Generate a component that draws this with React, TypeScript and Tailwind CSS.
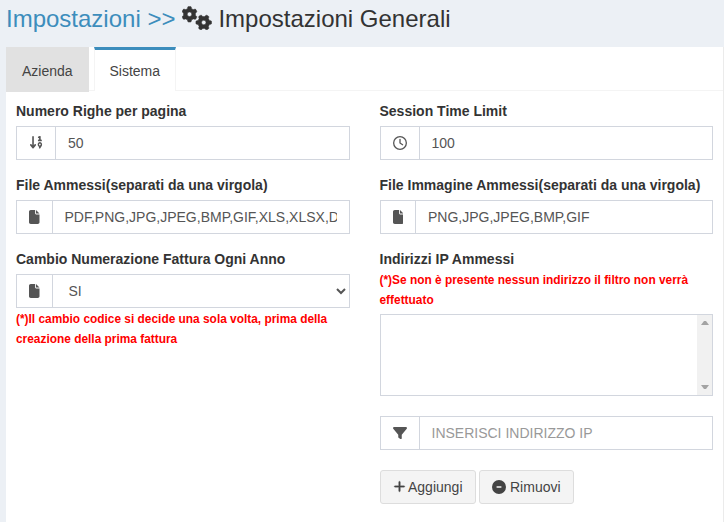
import type { ReactNode } from "react";
import {
  FaGears,
  FaArrowDown19,
  FaRegClock,
  FaFile,
  FaFilter,
  FaPlus,
  FaCircleMinus,
} from "react-icons/fa6";

function Label({ children }: { children: ReactNode }) {
  return <label className="block h-5 font-bold leading-5 text-[#333]">{children}</label>;
}

function Group({
  icon,
  wide = false,
  children,
}: {
  icon: ReactNode;
  wide?: boolean;
  children: ReactNode;
}) {
  return (
    <div className="flex h-[34px] border border-[#d2d6de] bg-white">
      <span
        className={
          "flex shrink-0 items-center justify-center border-r border-[#d2d6de] pb-px text-[14px] text-[#555] " +
          (wide ? "w-[39px]" : "w-[35.5px]")
        }
      >
        {icon}
      </span>
      {children}
    </div>
  );
}

function TextInput({ value, placeholder }: { value?: string; placeholder?: string }) {
  return (
    <input
      className="mx-3 h-8 min-w-0 flex-1 bg-transparent text-[14px] text-[#555] outline-none placeholder:text-[#999]"
      defaultValue={value}
      placeholder={placeholder}
    />
  );
}

function Note({ children }: { children: ReactNode }) {
  return <p className="text-[11.9px] font-bold leading-5 text-[#ff0000]">{children}</p>;
}

export default function App() {
  return (
    <div className="h-[522px] w-[724px] overflow-hidden bg-[#ecf0f5] pl-1.5 font-['Liberation_Sans',Arial,sans-serif] text-[14px] text-[#333]">
      <h1 className="flex h-[47px] items-start whitespace-pre pt-[5px] text-[24px] leading-[27px]">
        <span className="text-[#3c8dbc]">Impostazioni &gt;&gt;</span>
        <FaGears stroke="currentColor" strokeWidth="10" className="ml-[7px] mt-px h-6 w-[30px]" />
        <span className="ml-[6px]">Impostazioni Generali</span>
      </h1>

      <main className="h-[475px] border-r border-[#ebebeb] bg-white">
        <nav className="flex h-11 border-b border-[#f4f4f4] leading-5 text-[#444]">
          <div className="h-[45px] w-[83px] bg-[#e1e1e1] pl-4 pt-[14px]">Azienda</div>
          <div className="ml-[5px] h-11 w-[82px] border-x border-t-[3px] border-x-[#f4f4f4] border-t-[#3c8dbc] bg-white pl-[14.5px] pt-[11px]">
            Sistema
          </div>
        </nav>

        <div className="grid grid-cols-[333.5px_333.5px] gap-x-[30px] px-2.5 pt-[10px]">
          <section>
            <Label>Numero Righe per pagina</Label>
            <div className="mb-[15px] mt-[5px]">
              <Group
                wide
                icon={<FaArrowDown19 preserveAspectRatio="none" className="h-[14.5px] w-[14.5px]" />}
              >
                <TextInput value="50" />
              </Group>
            </div>
            <Label>File Ammessi(separati da una virgola)</Label>
            <div className="mb-[15px] mt-[5px]">
              <Group icon={<FaFile className="h-[14px] w-[10.5px]" />}>
                <TextInput value="PDF,PNG,JPG,JPEG,BMP,GIF,XLS,XLSX,DOC,DOCX" />
              </Group>
            </div>
            <Label>Cambio Numerazione Fattura Ogni Anno</Label>
            <div className="mt-[5px]">
              <Group icon={<FaFile className="h-[14px] w-[10.5px]" />}>
                <div className="flex flex-1 items-center justify-between pl-4 pr-[3px] text-[#555]">
                  <span>SI</span>
                  <svg width="10" height="8" viewBox="0 0 10 8" fill="none" stroke="#555" strokeWidth="2">
                    <path d="M1 2l4 4 4-4" />
                  </svg>
                </div>
              </Group>
            </div>
            <div className="mt-px">
              <Note>(*)Il cambio codice si decide una sola volta, prima della creazione della prima fattura</Note>
            </div>
          </section>

          <section>
            <Label>Session Time Limit</Label>
            <div className="mb-[15px] mt-[5px]">
              <Group wide icon={<FaRegClock />}>
                <TextInput value="100" />
              </Group>
            </div>
            <Label>File Immagine Ammessi(separati da una virgola)</Label>
            <div className="mb-[15px] mt-[5px]">
              <Group icon={<FaFile className="h-[14px] w-[10.5px]" />}>
                <TextInput value="PNG,JPG,JPEG,BMP,GIF" />
              </Group>
            </div>
            <Label>Indirizzi IP Ammessi</Label>
            <div className="mt-px">
              <Note>(*)Se non è presente nessun indirizzo il filtro non verrà effettuato</Note>
            </div>
            <div className="mt-1 flex h-[82px] justify-end border border-[#d2d6de]">
              <div className="flex w-[15px] flex-col items-center justify-between bg-[#f1f1f1] py-[6px] text-[#a3a3a3]">
                <svg width="8" height="4" viewBox="0 0 8 4" fill="currentColor">
                  <path d="M0 4L3 0H5L8 4z" />
                </svg>
                <svg width="8" height="4" viewBox="0 0 8 4" fill="currentColor">
                  <path d="M0 0L3 4H5L8 0z" />
                </svg>
              </div>
            </div>
            <div className="mt-5">
              <Group wide icon={<FaFilter />}>
                <TextInput placeholder="INSERISCI INDIRIZZO IP" />
              </Group>
            </div>
            <div className="mt-5 flex gap-[3px] text-[#444]">
              <button className="flex h-[34px] w-24 items-center rounded-[3px] border border-[#ddd] bg-[#f4f4f4] pl-3">
                <FaPlus stroke="currentColor" strokeWidth="10" className="mb-0.5 mr-[2.5px] size-[13px]" />
                Aggiungi
              </button>
              <button className="flex h-[34px] w-[95px] items-center rounded-[3px] border border-[#ddd] bg-[#f4f4f4] pl-3">
                <FaCircleMinus className="mb-px mr-[4.5px] size-[14px]" />
                Rimuovi
              </button>
            </div>
          </section>
        </div>
      </main>
    </div>
  );
}
